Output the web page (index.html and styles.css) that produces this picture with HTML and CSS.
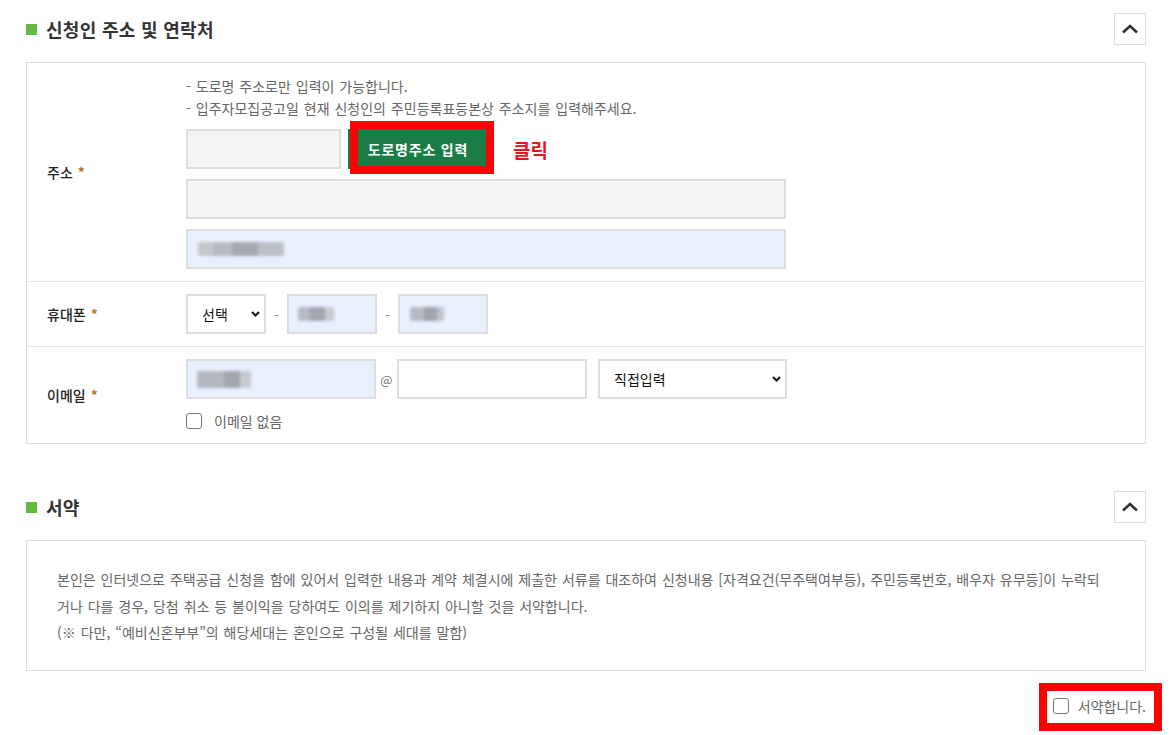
FILE: index.html
```html
<!DOCTYPE html>
<html lang="ko">
<head>
<meta charset="utf-8">
<title>신청인 주소 및 연락처</title>
<link rel="stylesheet" href="styles.css">
</head>
<body>
<div class="page">
  <section class="sec">
    <div class="sec-head">
      <h2 class="sec-title"><span class="bullet"></span>신청인 주소 및 연락처</h2>
      <button class="toggle" type="button" aria-label="접기"><svg width="18" height="10" viewBox="0 0 18 10"><polyline points="2,8.5 9,2 16,8.5" fill="none" stroke="#333" stroke-width="2.6"/></svg></button>
    </div>
    <div class="form-box">
      <div class="row">
        <div class="label">주소 <em>*</em></div>
        <div class="field">
          <p class="note">- 도로명 주소로만 입력이 가능합니다.</p>
          <p class="note">- 입주자모집공고일 현재 신청인의 주민등록표등본상 주소지를 입력해주세요.</p>
          <div class="zip-line">
            <div class="inp gray w-zip"></div>
            <div class="btn-wrap">
              <button class="btn-green" type="button">도로명주소 입력</button>
              <span class="mark mark-btn"></span>
            </div>
            <span class="click">클릭</span>
          </div>
          <div class="inp gray w-full"></div>
          <div class="inp auto w-full"><span class="blur b-addr"></span></div>
        </div>
      </div>
      <div class="row">
        <div class="label">휴대폰 <em>*</em></div>
        <div class="field">
          <div class="line">
            <div class="sel w-sel"><span>선택</span><svg width="9" height="6" viewBox="0 0 9 6"><polyline points="1,1 4.5,4.5 8,1" fill="none" stroke="#111" stroke-width="2"/></svg></div>
            <span class="sep">-</span>
            <div class="inp auto w-tel"><span class="blur b-tel"></span></div>
            <span class="sep">-</span>
            <div class="inp auto w-tel"><span class="blur b-tel2"></span></div>
          </div>
        </div>
      </div>
      <div class="row">
        <div class="label">이메일 <em>*</em></div>
        <div class="field field-mail">
          <div class="line">
            <div class="inp auto w-mail"><span class="blur b-mail"></span></div>
            <span class="sep at">@</span>
            <div class="inp w-dom"></div>
            <div class="sel w-dsel"><span>직접입력</span><svg width="9" height="6" viewBox="0 0 9 6"><polyline points="1,1 4.5,4.5 8,1" fill="none" stroke="#111" stroke-width="2"/></svg></div>
          </div>
          <label class="chk-line"><span class="chk"></span>이메일 없음</label>
        </div>
      </div>
    </div>
  </section>

  <section class="sec sec2">
    <div class="sec-head">
      <h2 class="sec-title"><span class="bullet"></span>서약</h2>
      <button class="toggle" type="button" aria-label="접기"><svg width="18" height="10" viewBox="0 0 18 10"><polyline points="2,8.5 9,2 16,8.5" fill="none" stroke="#333" stroke-width="2.6"/></svg></button>
    </div>
    <div class="pledge-box">
      <p>본인은 인터넷으로 주택공급 신청을 함에 있어서 입력한 내용과 계약 체결시에 제출한 서류를 대조하여 신청내용 [자격요건(무주택여부등), 주민등록번호, 배우자 유무등]이 누락되<br>거나 다를 경우, 당첨 취소 등 불이익을 당하여도 이의를 제기하지 아니할 것을 서약합니다.<br>(※ 다만, “예비신혼부부”의 해당세대는 혼인으로 구성될 세대를 말함)</p>
    </div>
    <div class="agree-row">
      <label class="agree"><span class="chk"></span>서약합니다.</label>
    </div>
  </section>
</div>
</body>
</html>
```

FILE: styles.css
```css
* { box-sizing: border-box; }
html, body { height: 100%; }
body {
  margin: 0;
  background: #fff;
  color: #333;
  font-family: "Noto Sans CJK KR", "Noto Sans", sans-serif;
  overflow: hidden;
}
.page {
  width: 1146px;
  padding: 13px 0 0 26px;
}
.sec-head {
  display: flex;
  align-items: center;
  justify-content: space-between;
  height: 32px;
  margin-bottom: 17px;
}
.sec-title {
  margin: 0;
  display: flex;
  align-items: center;
  gap: 9px;
  font-size: 18px;
  font-weight: 700;
  color: #333;
  line-height: 32px;
  letter-spacing: 0.3px;
}
.bullet {
  width: 11px;
  height: 11px;
  background: #66b944;
}
.toggle {
  width: 32px;
  height: 32px;
  padding: 0;
  border: 1px solid #ddd;
  background: #fff;
  display: flex;
  align-items: center;
  justify-content: center;
}
.form-box {
  border: 1px solid #ddd;
}
.row {
  display: flex;
  border-top: 1px solid #e3e3e3;
}
.row:first-child { border-top: 0; }
.label {
  width: 159px;
  padding-left: 20px;
  display: flex;
  align-items: center;
  font-size: 14px;
  font-weight: 500;
  color: #222;
}
.label em {
  font-style: normal;
  font-weight: 700;
  color: #b8742e;
  margin-left: 5px;
}
.field {
  flex: 1;
  padding: 12px 0;
}
.field-mail { padding-bottom: 10px; }
.note {
  margin: 0;
  font-size: 14px;
  line-height: 22px;
  color: #666;
  word-spacing: 1px;
}
.zip-line {
  display: flex;
  align-items: center;
  margin-top: 10px;
}
.inp {
  height: 40px;
  border: 2px solid #dedede;
  background: #fff;
  position: relative;
  display: flex;
  align-items: center;
}
.inp.gray { background: #f5f5f5; }
.inp.auto { background: #e8f0fe; }
.zip-line + .inp,
.inp.w-full + .inp.w-full { margin-top: 10px; }
.w-zip { width: 155px; }
.w-full { width: 600px; }
.w-tel { width: 90px; }
.w-mail { width: 190px; }
.w-dom { width: 190px; }
.btn-wrap {
  position: relative;
  margin-left: 7px;
}
.btn-green {
  display: block;
  width: 140px;
  height: 40px;
  padding: 0;
  border: 0;
  background: #1a7d46;
  color: #fff;
  font-family: inherit;
  font-size: 14px;
  font-weight: 700;
  letter-spacing: 0.8px;
}
.mark {
  position: absolute;
  border: 8px solid #f00;
  pointer-events: none;
}
.mark-btn {
  left: 2px;
  top: -8px;
  width: 144px;
  height: 53px;
}
.click {
  margin-left: 25px;
  color: #e8141b;
  font-size: 19px;
  font-weight: 700;
}
.line {
  display: flex;
  align-items: center;
}
.sel {
  height: 40px;
  border: 2px solid #dedede;
  background: #fff;
  display: flex;
  align-items: center;
  justify-content: space-between;
  padding: 0 4px 0 14px;
  font-size: 14px;
  color: #111;
}
.w-sel { width: 80px; }
.w-dsel { width: 189px; margin-left: 11px; }
.sep {
  width: 21px;
  text-align: center;
  font-size: 13px;
  color: #888;
}
.at { color: #777; }
.blur {
  position: absolute;
  height: 14px;
  filter: blur(1.6px);
  border-radius: 2px;
}
.b-addr {
  left: 10px;
  width: 86px;
  background: linear-gradient(90deg, #c3c6cc 0 18%, #b7bac2 18% 40%, #a5a9b2 40% 70%, #bcc0c7 70% 100%);
}
.b-tel {
  left: 9px;
  width: 36px;
  background: linear-gradient(90deg, #b8bcc4 0 30%, #a3a7b0 30% 75%, #c6c9cf 75% 100%);
}
.b-tel2 {
  left: 10px;
  width: 34px;
  background: linear-gradient(90deg, #b7bac2 0 40%, #9fa3ac 40% 80%, #c0c3ca 80% 100%);
}
.b-mail {
  left: 9px;
  width: 54px;
  height: 17px;
  background: linear-gradient(90deg, #b3b7bf 0 50%, #a2a6af 50% 80%, #c7cad0 80% 100%);
}
.chk-line {
  display: flex;
  align-items: center;
  gap: 12px;
  height: 24px;
  margin-top: 10px;
  font-size: 14px;
  color: #666;
}
.chk {
  width: 16px;
  height: 16px;
  border: 1px solid #777;
  border-radius: 3px;
  background: #fff;
  flex: none;
}
.sec2 { margin-top: 47px; }
.pledge-box {
  border: 1px solid #ddd;
  padding: 25px 30px 24px;
}
.pledge-box p {
  margin: 0;
  font-size: 14px;
  line-height: 26.5px;
  color: #666;
  white-space: nowrap;
  word-spacing: 1px;
}
.agree-row {
  display: flex;
  justify-content: flex-end;
  margin-top: 12px;
  margin-right: -16px;
}
.agree {
  display: flex;
  align-items: center;
  gap: 9px;
  height: 48px;
  padding: 3px 8px 5px 6px;
  border: 8px solid #f00;
  font-size: 14px;
  color: #666;
}
```
